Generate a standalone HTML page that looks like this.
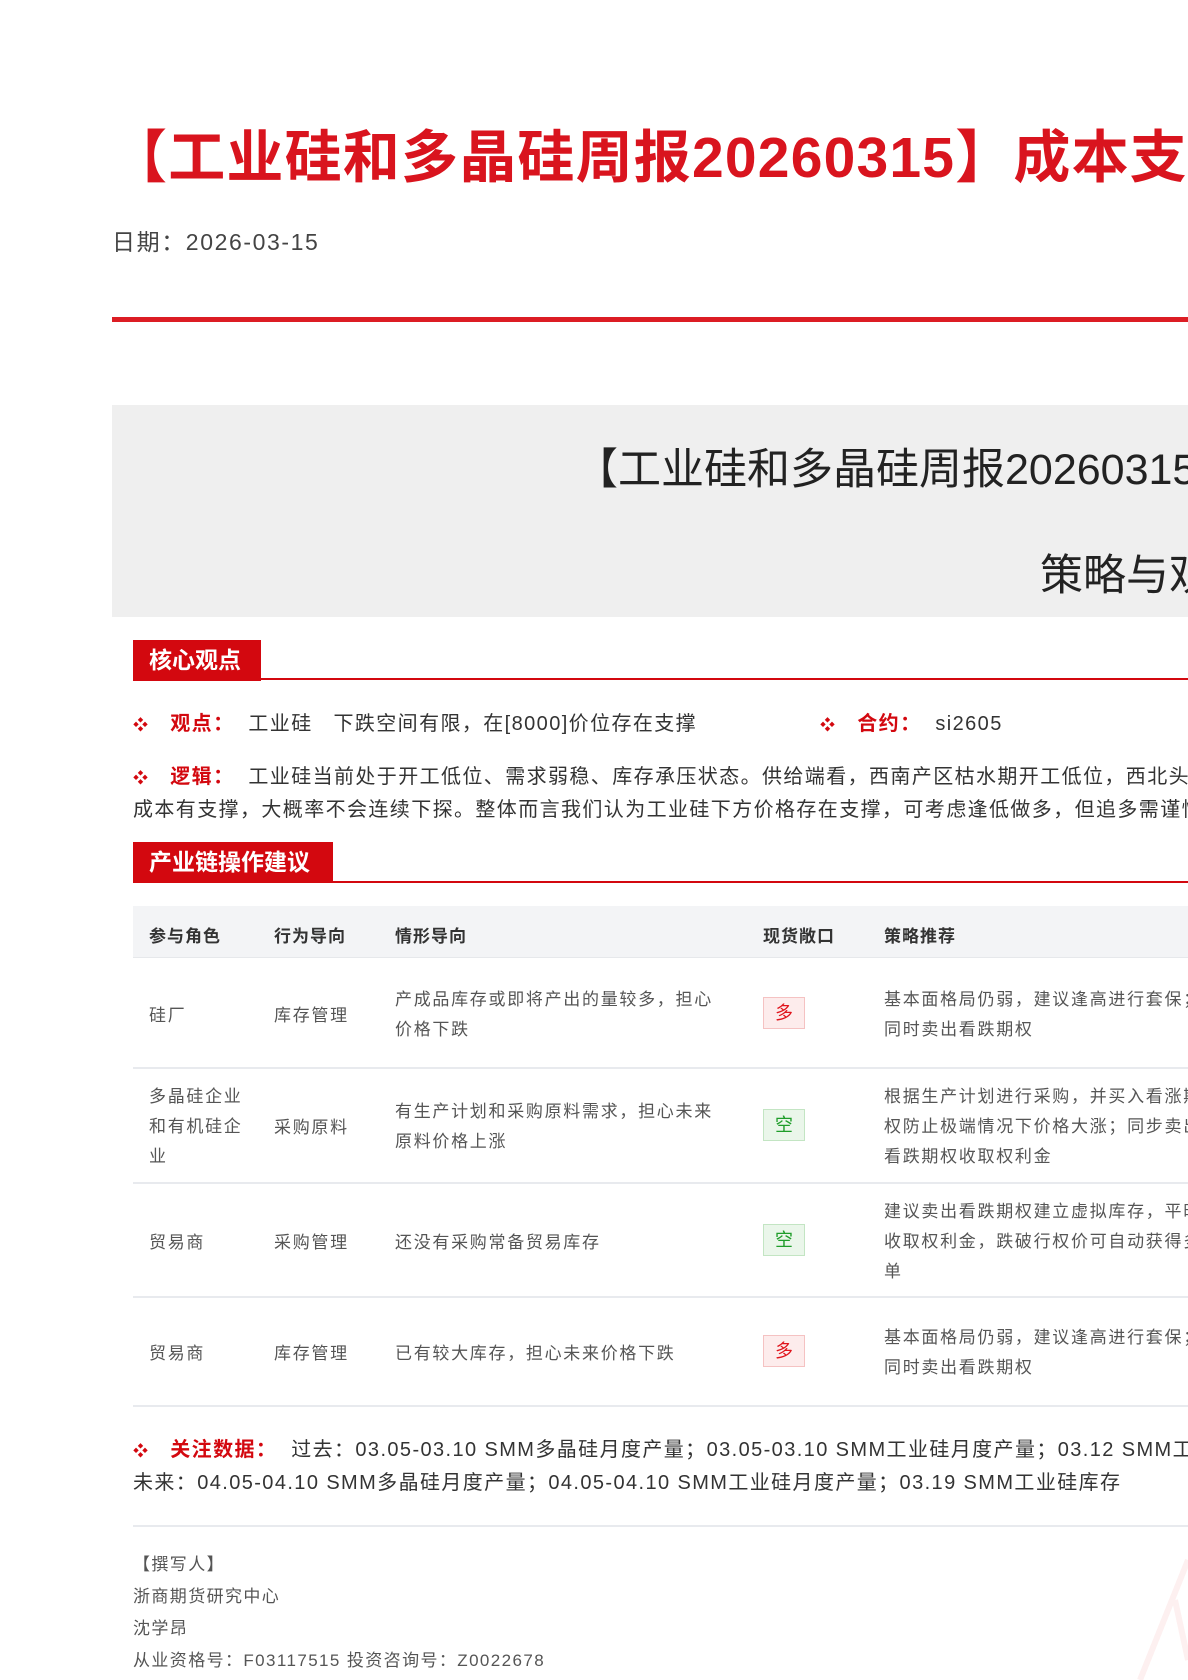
<!DOCTYPE html>
<html><head><meta charset="utf-8">
<style>
*{margin:0;padding:0;box-sizing:border-box}
html,body{width:1188px;height:1680px;overflow:hidden;background:#fff}
body{position:relative;font-family:"Liberation Sans","Noto Sans CJK SC",sans-serif;color:#333}
.a{position:absolute;white-space:nowrap}
.title{left:110px;top:112px;font-size:57px;font-weight:bold;color:#d9141e;letter-spacing:1.2px}
.date{left:112px;top:223px;font-size:23px;color:#444;letter-spacing:1.6px}
.redline{left:112px;top:317px;width:1076px;height:5px;background:#dc1d24}
.grey{left:112px;top:405px;width:1076px;height:212px;background:#efefef}
.gt1{left:575px;top:435px;font-size:43px;color:#222}
.gt2{left:1040px;top:541px;font-size:43px;color:#222}
.tab{background:#d3080f;color:#fff;font-size:23px;font-weight:bold;padding-left:16px;line-height:41px;height:41px}
.hl{height:2px;background:#d3080f;left:133px;width:1055px}
.t{font-size:20px;color:#333;letter-spacing:1.4px}
.red{color:#d3080f;font-weight:bold}
.dot{color:#d3080f;font-size:15px}
.th{left:133px;top:906px;width:1055px;height:52px;background:#f3f4f6;border-bottom:1px solid #e6e8eb}
.hd{font-size:17px;font-weight:bold;color:#333;top:922px;letter-spacing:1px}
.c{font-size:17px;color:#555;line-height:30px;letter-spacing:1.7px}
.w{letter-spacing:1.4px}
.rb{left:133px;width:1055px;height:2px;background:#e8eaee}
.tag{width:42px;height:32px;font-size:18px;text-align:center;line-height:30px}
.duo{background:#fdecec;border:1px solid #f5c2c2;color:#e0141c}
.kong{background:#eaf6ea;border:1px solid #c3e5c3;color:#1f9d2a}
</style></head><body>
<div class="a title">【工业硅和多晶硅周报20260315】成本支撑，下方空间有限</div>
<div class="a date">日期：2026-03-15</div>
<div class="a redline"></div>
<div class="a grey"></div>
<div class="a gt1">【工业硅和多晶硅周报20260315】</div>
<div class="a gt2">策略与观点</div>

<div class="a tab" style="left:133px;top:640px;width:128px">核心观点</div>
<div class="a hl" style="top:678px"></div>
<div class="a t" style="left:133px;top:707px"><span class="dot">❖</span>&nbsp;&nbsp;&nbsp;<span class="red">观点：</span>&nbsp;&nbsp;工业硅&nbsp;&nbsp;&nbsp;下跌空间有限，在[8000]价位存在支撑</div>
<div class="a t" style="left:820px;top:707px"><span class="dot">❖</span>&nbsp;&nbsp;&nbsp;<span class="red">合约：</span>&nbsp;&nbsp;si2605</div>
<div class="a t" style="left:133px;top:760px"><span class="dot">❖</span>&nbsp;&nbsp;&nbsp;<span class="red">逻辑：</span>&nbsp;&nbsp;工业硅当前处于开工低位、需求弱稳、库存承压状态。供给端看，西南产区枯水期开工低位，西北头部企业</div>
<div class="a t" style="left:133px;top:793px">成本有支撑，大概率不会连续下探。整体而言我们认为工业硅下方价格存在支撑，可考虑逢低做多，但追多需谨慎。</div>

<div class="a tab" style="left:133px;top:842px;width:200px">产业链操作建议</div>
<div class="a hl" style="top:881px"></div>

<div class="a th"></div>
<div class="a hd" style="left:149px">参与角色</div>
<div class="a hd" style="left:274px">行为导向</div>
<div class="a hd" style="left:395px">情形导向</div>
<div class="a hd" style="left:763px">现货敞口</div>
<div class="a hd" style="left:884px">策略推荐</div>

<div class="a c" style="left:149px;top:1001px">硅厂</div>
<div class="a c" style="left:274px;top:1001px">库存管理</div>
<div class="a c" style="left:395px;top:985px">产成品库存或即将产出的量较多，担心<br>价格下跌</div>
<div class="a tag duo" style="left:763px;top:997px">多</div>
<div class="a c" style="left:884px;top:985px">基本面格局仍弱，建议逢高进行套保；<br>同时卖出看跌期权</div>
<div class="a rb" style="top:1067px"></div>

<div class="a c" style="left:149px;top:1082px">多晶硅企业<br>和有机硅企<br>业</div>
<div class="a c" style="left:274px;top:1113px">采购原料</div>
<div class="a c" style="left:395px;top:1097px">有生产计划和采购原料需求，担心未来<br>原料价格上涨</div>
<div class="a tag kong" style="left:763px;top:1109px">空</div>
<div class="a c" style="left:884px;top:1082px">根据生产计划进行采购，并买入看涨期<br>权防止极端情况下价格大涨；同步卖出<br>看跌期权收取权利金</div>
<div class="a rb" style="top:1182px"></div>

<div class="a c" style="left:149px;top:1228px">贸易商</div>
<div class="a c" style="left:274px;top:1228px">采购管理</div>
<div class="a c" style="left:395px;top:1228px">还没有采购常备贸易库存</div>
<div class="a tag kong" style="left:763px;top:1224px">空</div>
<div class="a c" style="left:884px;top:1197px">建议卖出看跌期权建立虚拟库存，平时<br>收取权利金，跌破行权价可自动获得多<br>单</div>
<div class="a rb" style="top:1296px"></div>

<div class="a c" style="left:149px;top:1339px">贸易商</div>
<div class="a c" style="left:274px;top:1339px">库存管理</div>
<div class="a c" style="left:395px;top:1339px">已有较大库存，担心未来价格下跌</div>
<div class="a tag duo" style="left:763px;top:1335px">多</div>
<div class="a c" style="left:884px;top:1323px">基本面格局仍弱，建议逢高进行套保；<br>同时卖出看跌期权</div>
<div class="a rb" style="top:1405px"></div>

<div class="a t" style="left:133px;top:1433px"><span class="dot">❖</span>&nbsp;&nbsp;&nbsp;<span class="red">关注数据：</span>&nbsp;&nbsp;过去：03.05-03.10 SMM多晶硅月度产量；03.05-03.10 SMM工业硅月度产量；03.12 SMM工业硅库存</div>
<div class="a t" style="left:133px;top:1466px">未来：04.05-04.10 SMM多晶硅月度产量；04.05-04.10 SMM工业硅月度产量；03.19 SMM工业硅库存</div>
<div class="a rb" style="top:1525px"></div>

<svg class="a" style="left:1000px;top:1520px" width="188" height="160"><path d="M188 40 L140 160 M175 80 L188 140" stroke="#fdf0f0" stroke-width="6" fill="none"/></svg>

<div class="a c w" style="left:133px;top:1550px">【撰写人】</div>
<div class="a c w" style="left:133px;top:1582px">浙商期货研究中心</div>
<div class="a c w" style="left:133px;top:1614px">沈学昂</div>
<div class="a c w" style="left:133px;top:1646px">从业资格号：F03117515 投资咨询号：Z0022678</div>
</body></html>
